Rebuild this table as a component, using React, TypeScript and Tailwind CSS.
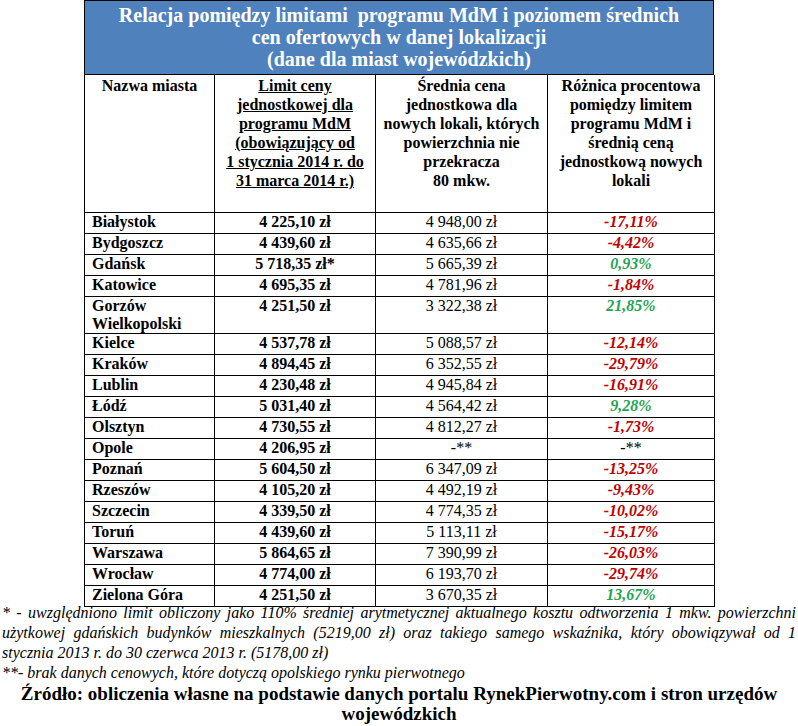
import React from "react"

type Row = {
  city: string
  limit: string
  avg: string
  diff: string
  up?: boolean
  tall?: boolean
}

const rows: Row[] = [
  { city: "Białystok", limit: "4 225,10 zł", avg: "4 948,00 zł", diff: "-17,11%" },
  { city: "Bydgoszcz", limit: "4 439,60 zł", avg: "4 635,66 zł", diff: "-4,42%" },
  { city: "Gdańsk", limit: "5 718,35 zł*", avg: "5 665,39 zł", diff: "0,93%", up: true },
  { city: "Katowice", limit: "4 695,35 zł", avg: "4 781,96 zł", diff: "-1,84%" },
  { city: "Gorzów Wielkopolski", limit: "4 251,50 zł", avg: "3 322,38 zł", diff: "21,85%", up: true, tall: true },
  { city: "Kielce", limit: "4 537,78 zł", avg: "5 088,57 zł", diff: "-12,14%" },
  { city: "Kraków", limit: "4 894,45 zł", avg: "6 352,55 zł", diff: "-29,79%" },
  { city: "Lublin", limit: "4 230,48 zł", avg: "4 945,84 zł", diff: "-16,91%" },
  { city: "Łódź", limit: "5 031,40 zł", avg: "4 564,42 zł", diff: "9,28%", up: true },
  { city: "Olsztyn", limit: "4 730,55 zł", avg: "4 812,27 zł", diff: "-1,73%" },
  { city: "Opole", limit: "4 206,95 zł", avg: "-**", diff: "-**" },
  { city: "Poznań", limit: "5 604,50 zł", avg: "6 347,09 zł", diff: "-13,25%" },
  { city: "Rzeszów", limit: "4 105,20 zł", avg: "4 492,19 zł", diff: "-9,43%" },
  { city: "Szczecin", limit: "4 339,50 zł", avg: "4 774,35 zł", diff: "-10,02%" },
  { city: "Toruń", limit: "4 439,60 zł", avg: "5 113,11 zł", diff: "-15,17%" },
  { city: "Warszawa", limit: "5 864,65 zł", avg: "7 390,99 zł", diff: "-26,03%" },
  { city: "Wrocław", limit: "4 774,00 zł", avg: "6 193,70 zł", diff: "-29,74%" },
  { city: "Zielona Góra", limit: "4 251,50 zł", avg: "3 670,35 zł", diff: "13,67%", up: true },
]

const serif = "font-['Liberation_Serif','Times_New_Roman',serif]"

function Lines({ items }: { items: string[] }) {
  return (
    <>
      {items.map((t, i) => (
        <span key={i} className="block">
          {t}
        </span>
      ))}
    </>
  )
}

export default function App() {
  return (
    <div className={`w-[798px] h-[726px] bg-white text-black ${serif}`}>
      <div className="mx-auto w-[630px]">
        {/* nagłówek */}
        <div className="h-[75px] border border-black bg-[#4f81bd] pt-[3px] text-center text-[20px] font-bold leading-[22px] text-white">
          <p>Relacja pomiędzy limitami&nbsp; programu MdM i poziomem średnich</p>
          <p>cen ofertowych w danej lokalizacji</p>
          <p>(dane dla miast wojewódzkich)</p>
        </div>

        <table className={`w-[630px] table-fixed border-collapse ${serif}`}>
          <colgroup>
            <col className="w-[130px]" />
            <col className="w-[161px]" />
            <col className="w-[172px]" />
            <col className="w-[167px]" />
          </colgroup>
          <thead>
            <tr className="h-[137px] align-top text-[16px] font-bold leading-[19px]">
              <th className="border border-t-0 border-black pt-[1px] font-bold">Nazwa miasta</th>
              <th className="border border-t-0 border-black pt-[1px] font-bold underline">
                <Lines
                  items={[
                    "Limit ceny",
                    "jednostkowej dla",
                    "programu MdM",
                    "(obowiązujący od",
                    "1 stycznia 2014 r. do",
                    "31 marca 2014 r.)",
                  ]}
                />
              </th>
              <th className="border border-t-0 border-black pt-[1px] font-bold">
                <Lines
                  items={[
                    "Średnia cena",
                    "jednostkowa dla",
                    "nowych lokali, których",
                    "powierzchnia nie",
                    "przekracza",
                    "80 mkw.",
                  ]}
                />
              </th>
              <th className="border border-t-0 border-black pt-[1px] font-bold">
                <Lines
                  items={[
                    "Różnica procentowa",
                    "pomiędzy limitem",
                    "programu MdM i",
                    "średnią ceną",
                    "jednostkową nowych",
                    "lokali",
                  ]}
                />
              </th>
            </tr>
          </thead>
          <tbody className="text-[16px] leading-[18px]">
            {rows.map((r) => (
              <tr key={r.city} className={`align-top ${r.tall ? "h-[37px]" : "h-[21px]"}`}>
                <td className="border border-black pl-[7px] font-bold">{r.city}</td>
                <td className="border border-black text-center font-bold">{r.limit}</td>
                <td className="border border-black text-center">{r.avg}</td>
                <td
                  className={`border border-black text-center ${
                    r.diff === "-**" ? "" : r.up ? "font-bold italic text-[#1ea552]" : "font-bold italic text-[#c00000]"
                  }`}
                >
                  {r.diff}
                </td>
              </tr>
            ))}
          </tbody>
        </table>
      </div>

      {/* przypisy */}
      <div className="-mt-[4px] px-[2px] text-[16px] italic leading-[20px]">
        <p className="text-justify [text-align-last:justify]">
          * - uwzględniono limit obliczony jako 110% średniej arytmetycznej aktualnego kosztu odtworzenia 1 mkw. powierzchni
        </p>
        <p className="text-justify [text-align-last:justify]">
          użytkowej gdańskich budynków mieszkalnych (5219,00 zł) oraz takiego samego wskaźnika, który obowiązywał od 1
        </p>
        <p>stycznia 2013 r. do 30 czerwca 2013 r. (5178,00 zł)</p>
        <p>**- brak danych cenowych, które dotyczą opolskiego rynku pierwotnego</p>
      </div>
      <p className="pt-[1px] text-center text-[19px] font-bold leading-[20px]">
        Źródło: obliczenia własne na podstawie danych portalu RynekPierwotny.com i stron urzędów wojewódzkich
      </p>
    </div>
  )
}
